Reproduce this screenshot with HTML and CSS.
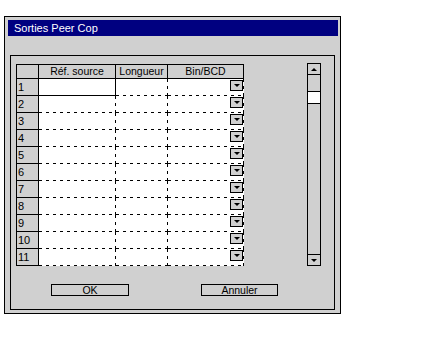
FILE: index.html
```html
<!DOCTYPE html>
<html lang="fr">
<head>
  <meta charset="UTF-8" />
  <title>Sorties Peer Cop</title>
  <link rel="stylesheet" href="styles.css">
</head>
<body>
  <div class="dialog">
    <div class="title-bar">Sorties Peer Cop</div>

    <div class="group">
      <div class="grid-row">
        <div class="table">
          <div class="row head">
            <div class="cell num"></div>
            <div class="cell">Réf. source</div>
            <div class="cell">Longueur</div>
            <div class="cell">Bin/BCD</div>
          </div>
          <div class="row"><div class="cell num">1</div><div class="cell ref selected"></div><div class="cell len"></div><div class="cell bin"><span class="drop"></span></div></div>
          <div class="row"><div class="cell num">2</div><div class="cell ref"></div><div class="cell len"></div><div class="cell bin"><span class="drop"></span></div></div>
          <div class="row"><div class="cell num">3</div><div class="cell ref"></div><div class="cell len"></div><div class="cell bin"><span class="drop"></span></div></div>
          <div class="row"><div class="cell num">4</div><div class="cell ref"></div><div class="cell len"></div><div class="cell bin"><span class="drop"></span></div></div>
          <div class="row"><div class="cell num">5</div><div class="cell ref"></div><div class="cell len"></div><div class="cell bin"><span class="drop"></span></div></div>
          <div class="row"><div class="cell num">6</div><div class="cell ref"></div><div class="cell len"></div><div class="cell bin"><span class="drop"></span></div></div>
          <div class="row"><div class="cell num">7</div><div class="cell ref"></div><div class="cell len"></div><div class="cell bin"><span class="drop"></span></div></div>
          <div class="row"><div class="cell num">8</div><div class="cell ref"></div><div class="cell len"></div><div class="cell bin"><span class="drop"></span></div></div>
          <div class="row"><div class="cell num">9</div><div class="cell ref"></div><div class="cell len"></div><div class="cell bin"><span class="drop"></span></div></div>
          <div class="row"><div class="cell num">10</div><div class="cell ref"></div><div class="cell len"></div><div class="cell bin"><span class="drop"></span></div></div>
          <div class="row"><div class="cell num">11</div><div class="cell ref"></div><div class="cell len"></div><div class="cell bin"><span class="drop"></span></div></div>
        </div>

        <div class="scrollbar">
          <div class="sb-btn"><span class="tri-up"></span></div>
          <div class="sb-track"><div class="sb-thumb"></div></div>
          <div class="sb-btn"><span class="tri-down"></span></div>
        </div>
      </div>

      <div class="actions">
        <button class="btn ok">OK</button>
        <button class="btn cancel">Annuler</button>
      </div>
    </div>
  </div>
</body>
</html>
```

FILE: styles.css
```css
body {
  margin: 0; background: #fff;
  font-family: "Liberation Sans", Arial, sans-serif; font-size: 11px; color: #000;
}
.dialog {
  box-sizing: border-box; width: 337px; height: 298px;
  margin: 16px 0 0 4px; padding: 3px;
  border: 1px solid #000; background: #d0d0d0;
}
.title-bar {
  height: 16px; width: 330px; padding-left: 6px; box-sizing: border-box;
  background: #000080; color: #fff; font-size: 11px; line-height: 16px;
}
.group {
  box-sizing: border-box; width: 325px; height: 255px;
  margin: 19px 0 0 2px; padding: 8px 0 0 5px;
  border: 1px solid #000;
}
.grid-row { display: flex; align-items: flex-start; }

/* table */
.table { border-left: 1px solid #000; border-top: 1px solid #000; background: #fff; }
.row { display: flex; height: 17px; }
.row.head { height: 14px; background: #d0d0d0; }
.cell {
  box-sizing: border-box; height: 100%; position: relative;
  border-right: 1px solid transparent; border-bottom: 1px solid transparent;
  background-image:
    repeating-linear-gradient(to right, #000 0 3px, transparent 3px 7px),
    repeating-linear-gradient(to bottom, #000 0 3px, transparent 3px 7px);
  background-size: 100% 1px, 1px 100%;
  background-position: left bottom, right top;
  background-repeat: no-repeat;
  background-origin: border-box;
}
.cell:nth-child(1) { width: 22px; }
.cell:nth-child(2) { width: 77px; }
.cell:nth-child(3) { width: 52px; }
.cell:nth-child(4) { width: 76px; }
.head .cell, .cell.num, .cell.selected {
  background-image: none; border-right-color: #000; border-bottom-color: #000;
}
.head .cell { text-align: center; line-height: 13px; font-size: 10.5px; }
.cell.num { background-color: #d0d0d0; padding-left: 1px; line-height: 16px; font-size: 11px; }
.drop {
  position: absolute; right: 0; top: 1px;
  box-sizing: border-box; width: 13px; height: 11px;
  border: 1px solid #000; background: #d0d0d0;
  display: flex; align-items: center; justify-content: center;
}
.drop::after, .tri-down {
  content: ""; width: 0; height: 0;
  border-left: 3px solid transparent; border-right: 3px solid transparent; border-top: 3px solid #000;
}
.tri-up {
  width: 0; height: 0;
  border-left: 3px solid transparent; border-right: 3px solid transparent; border-bottom: 3px solid #000;
}

/* scrollbar */
.scrollbar {
  margin: -1px 0 0 63px; width: 14px; height: 203px;
  display: flex; flex-direction: column;
}
.sb-btn {
  box-sizing: border-box; height: 12px; border: 1px solid #000;
  display: flex; align-items: center; justify-content: center;
}
.sb-track {
  flex: 1; border-left: 1px solid #000; border-right: 1px solid #000;
  padding-top: 16px;
}
.sb-thumb {
  box-sizing: border-box; height: 13px; background: #fff;
  border-top: 1px solid #000; border-bottom: 1px solid #000;
}

/* buttons */
.actions { display: flex; margin-top: 18px; }
.btn {
  box-sizing: border-box; height: 12px; padding: 0;
  border: 1px solid #000; background: #d0d0d0; color: #000;
  font-family: inherit; font-size: 10.5px; line-height: 10px;
}
.btn.ok { width: 78px; margin-left: 35px; }
.btn.cancel { width: 77px; margin-left: 72px; }
```
